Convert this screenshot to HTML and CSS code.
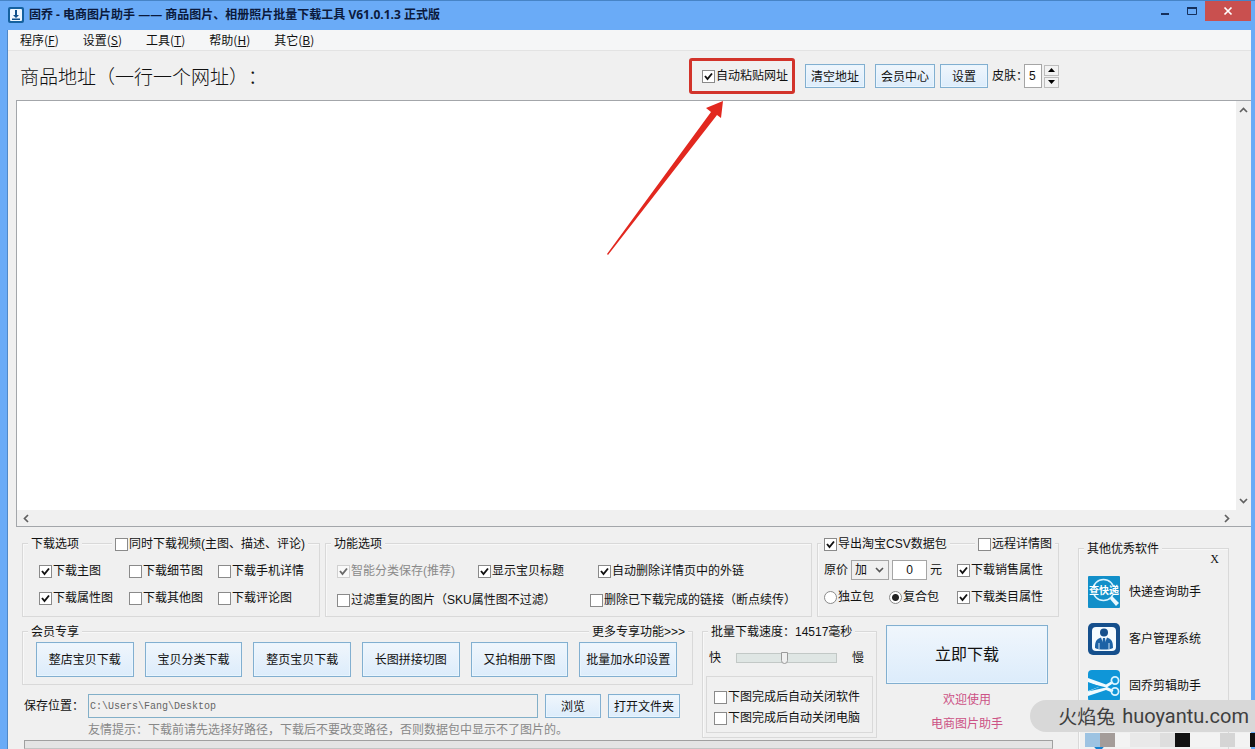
FILE: index.html
```html
<!DOCTYPE html>
<html lang="zh-CN">
<head>
<meta charset="utf-8">
<title>固乔 - 电商图片助手</title>
<link rel="stylesheet" href="styles.css">
</head>
<body>
<header class="titlebar">
  <svg class="app-icon" viewBox="0 0 16 16" aria-hidden="true">
    <rect width="16" height="16" rx="2" fill="#15619f"/>
    <rect x="2" y="2" width="12" height="12" rx="1" fill="#eef7ff"/>
    <path d="M7 3h2v5h2L8 11 5 8h2zM4 11.5h8v1.5H4z" fill="#0d4f8c"/>
  </svg>
  <h1 class="title">固乔 - 电商图片助手 —— 商品图片、相册照片批量下载工具 V61.0.1.3 正式版</h1>
  <div class="window-buttons">
    <button class="win-btn" aria-label="最小化"><svg width="10" height="10"><path d="M1 7h8v2H1z" fill="#16305c"/></svg></button>
    <button class="win-btn" aria-label="最大化"><svg width="12" height="10"><path d="M1.5 1.5h9v7h-9z" fill="none" stroke="#16305c"/><path d="M1 1h10v2H1z" fill="#16305c"/></svg></button>
    <button class="win-btn close" aria-label="关闭"><svg width="10" height="10"><path d="M1.500 1.500l7 7M8.500 1.500l-7 7" stroke="#fff" stroke-width="1.700"/></svg></button>
  </div>
</header>

<div class="client">
  <nav class="menubar">
    <button>程序(<u>F</u>)</button>
    <button>设置(<u>S</u>)</button>
    <button>工具(<u>T</u>)</button>
    <button>帮助(<u>H</u>)</button>
    <button>其它(<u>B</u>)</button>
  </nav>

  <div class="toolbar">
    <label class="address-label" for="urls">商品地址（一行一个网址）：</label>
    <div class="tools">
      <div class="highlight">
        <label class="opt"><input type="checkbox" checked>自动粘贴网址</label>
        <svg class="arrow" width="118" height="156" aria-hidden="true"><path d="M117 1L100 8l5 4L1 154l1 1L111 15l4 3z" fill="#e2281f"/></svg>
      </div>
      <button class="btn w60">清空地址</button>
      <button class="btn w60">会员中心</button>
      <button class="btn w48">设置</button>
      <div class="skin">
        <label for="skin">皮肤：</label>
        <input id="skin" class="skin-input" type="text" value="5">
        <div class="spinner">
          <button aria-label="增加"><svg width="7" height="4"><path d="M3.500 0L7 4H0z"/></svg></button>
          <button aria-label="减少"><svg width="7" height="4"><path d="M0 0h7L3.500 4z"/></svg></button>
        </div>
      </div>
    </div>
  </div>

  <div class="editor">
    <textarea id="urls"></textarea>
    <div class="scroll-v">
      <svg width="9" height="6"><path d="M1 5l3.500-3.500L8 5" class="chev"/></svg>
      <svg width="9" height="6"><path d="M1 1l3.500 3.500L8 1" class="chev"/></svg>
    </div>
    <div class="scroll-h">
      <svg width="6" height="9"><path d="M5 1L1.500 4.500 5 8" class="chev"/></svg>
      <svg width="6" height="9"><path d="M1 1l3.500 3.500L1 8" class="chev"/></svg>
    </div>
  </div>

  <main class="bottom">
    <div class="settings">
      <div class="row-options">
        <section class="group">
          <div class="group-head">
            <h2 class="tag">下载选项</h2>
            <label class="opt tag"><input type="checkbox">同时下载视频(主图、描述、评论)</label>
          </div>
          <div class="grid-download">
            <label class="opt"><input type="checkbox" checked>下载主图</label>
            <label class="opt"><input type="checkbox">下载细节图</label>
            <label class="opt"><input type="checkbox">下载手机详情</label>
            <label class="opt"><input type="checkbox" checked>下载属性图</label>
            <label class="opt"><input type="checkbox">下载其他图</label>
            <label class="opt"><input type="checkbox">下载评论图</label>
          </div>
        </section>

        <section class="group">
          <div class="group-head"><h2 class="tag">功能选项</h2></div>
          <div class="lines-feature">
            <div class="three">
              <label class="opt disabled"><input type="checkbox" checked disabled>智能分类保存(推荐)</label>
              <label class="opt"><input type="checkbox" checked>显示宝贝标题</label>
              <label class="opt"><input type="checkbox" checked>自动删除详情页中的外链</label>
            </div>
            <div class="two">
              <label class="opt"><input type="checkbox">过滤重复的图片（SKU属性图不过滤）</label>
              <label class="opt"><input type="checkbox">删除已下载完成的链接（断点续传）</label>
            </div>
          </div>
        </section>

        <section class="group">
          <div class="group-head csv-head">
            <label class="opt tag"><input type="checkbox" checked>导出淘宝CSV数据包</label>
            <label class="opt tag"><input type="checkbox">远程详情图</label>
          </div>
          <div class="csv-body">
            <div class="line">
              <div class="price">
                <label for="op">原价</label>
                <select id="op"><option>加</option></select>
                <input type="text" value="0" aria-label="加价金额">
                <span>元</span>
              </div>
              <label class="opt"><input type="checkbox" checked>下载销售属性</label>
            </div>
            <div class="line">
              <div class="radios">
                <label class="opt"><input type="radio" name="pack">独立包</label>
                <label class="opt"><input type="radio" name="pack" checked>复合包</label>
              </div>
              <label class="opt"><input type="checkbox" checked>下载类目属性</label>
            </div>
          </div>
        </section>
      </div>

      <div class="row-actions">
        <div class="member-col">
          <section class="group">
            <div class="group-head spread">
              <h2 class="tag">会员专享</h2>
              <a class="tag" href="#">更多专享功能&gt;&gt;&gt;</a>
            </div>
            <div class="member-buttons">
              <button class="btn">整店宝贝下载</button>
              <button class="btn">宝贝分类下载</button>
              <button class="btn">整页宝贝下载</button>
              <button class="btn">长图拼接切图</button>
              <button class="btn">又拍相册下图</button>
              <button class="btn">批量加水印设置</button>
            </div>
          </section>
          <div class="save">
            <label for="path">保存位置：</label>
            <input id="path" type="text" value="C:\Users\Fang\Desktop" readonly>
            <button class="btn">浏览</button>
            <button class="btn">打开文件夹</button>
            <p class="hint">友情提示：下载前请先选择好路径，下载后不要改变路径，否则数据包中显示不了图片的。</p>
          </div>
        </div>

        <section class="group speed">
          <div class="group-head"><h2 class="tag">批量下载速度：14517毫秒</h2></div>
          <div class="slider">
            <span>快</span>
            <input type="range" min="0" max="100" value="48" aria-label="批量下载速度">
            <span>慢</span>
          </div>
          <div class="after">
            <label class="opt"><input type="checkbox">下图完成后自动关闭软件</label>
            <label class="opt"><input type="checkbox">下图完成后自动关闭电脑</label>
          </div>
        </section>

        <div class="start">
          <button class="btn go">立即下载</button>
          <p>欢迎使用</p>
          <p>电商图片助手</p>
        </div>
      </div>

      <div class="progress" role="progressbar" aria-label="下载进度"></div>
    </div>

    <aside class="group software">
      <div class="group-head"><h2 class="tag">其他优秀软件</h2></div>
      <button class="hide" aria-label="关闭推荐">X</button>
      <ul>
        <li>
          <svg width="32" height="32" viewBox="0 0 32 32" aria-hidden="true">
            <rect width="32" height="32" rx="1" fill="#128fc9"/>
            <circle cx="15.500" cy="14" r="10.500" fill="none" stroke="#d8f3ff" stroke-width="1.500"/>
            <path d="M24 20l7 7-3 3-6-7z" fill="#e8f8ff"/>
            <rect x="1" y="10" width="30" height="9" fill="#128fc9"/>
            <text x="16" y="18" text-anchor="middle" class="icon-text">查快递</text>
          </svg>
          <span>快递查询助手</span>
        </li>
        <li>
          <svg width="32" height="32" viewBox="0 0 32 32" aria-hidden="true">
            <rect width="32" height="32" rx="5" fill="#154f8c"/>
            <rect x="4" y="4" width="24" height="24" rx="4" fill="#f4fbff"/>
            <circle cx="16" cy="9.500" r="4" fill="#154f8c"/>
            <path d="M7 25c0-6 1-9 6-10.500l3 8 3-8c5 1.500 6 4.500 6 10.500-4 2-14 2-18 0z" fill="#1d62a5"/>
            <path d="M15 15h2l1 6-2 4-2-4z" fill="#1d62a5"/>
            <path d="M11 20v6M21 20v6" stroke="#cfe6f8"/>
          </svg>
          <span>客户管理系统</span>
        </li>
        <li>
          <svg width="32" height="32" viewBox="0 0 32 32" aria-hidden="true">
            <rect width="32" height="32" rx="4" fill="#0f96d8"/>
            <path d="M0 8l18 6.500 6-3.500 1.500 2-6 4-1 .5L0 13l11 4L0 21.500l18-4 1-.5 6.500 3-1.500 2.500-6-2.500L0 26z" fill="#f2fbff"/>
            <path d="M0 12l12 4.500L0 21z" fill="#0f96d8"/>
            <circle cx="27" cy="10.500" r="3.600" fill="none" stroke="#d8f3ff" stroke-width="1.800"/>
            <circle cx="27" cy="21.500" r="3.600" fill="none" stroke="#d8f3ff" stroke-width="1.800"/>
          </svg>
          <span>固乔剪辑助手</span>
        </li>
        <li>
          <svg width="32" height="32" viewBox="0 0 32 32" aria-hidden="true">
            <path d="M2 16h18c0 8-3 13-6 16H8c-4-4-6-9-6-16z" fill="#1580cf"/>
          </svg>
        </li>
      </ul>
    </aside>
  </main>
</div>

<div class="mosaic" aria-hidden="true">
  <i class="blue"></i><i class="taupe"></i><i></i><i class="g1"></i><i class="g1"></i><i class="g2"></i><i class="black"></i><i></i><i></i><i class="g3"></i><i></i><i class="black"></i>
</div>
<div class="watermark"><span class="mark-cn">火焰兔</span><span class="mark-en">huoyantu.com</span></div>
</body>
</html>
```

FILE: styles.css
```css
* {
  box-sizing: border-box;
}

body {
  margin: 0;
  height: 100vh;
  display: flex;
  flex-direction: column;
  position: relative;
  overflow: hidden;
  background: #6aabf7;
  border-top: 1px solid #4784c6;
  color: #111;
  font: 12px/16px "Liberation Sans", "Noto Sans CJK SC", sans-serif;
  text-spacing-trim: space-all;
  white-space: nowrap;
}

button,
input,
select,
textarea {
  margin: 0;
  padding: 0;
  font: inherit;
  color: inherit;
}

h1,
h2,
p,
ul {
  margin: 0;
  padding: 0;
  font-size: 12px;
  font-weight: 400;
  list-style: none;
}

svg {
  display: block;
}

/* Title bar */
.titlebar {
  display: flex;
  align-items: center;
  height: 29px;
  padding: 0 4px 2px 8px;
}

.app-icon {
  width: 16px;
  height: 16px;
  margin-right: 5px;
}

.title {
  flex: 1;
  font-family: "Open Sans", "Noto Sans CJK SC", sans-serif;
  font-weight: 700;
  color: #0b1a3c;
}

.window-buttons {
  display: flex;
  align-self: flex-start;
}

.win-btn {
  display: flex;
  align-items: center;
  justify-content: center;
  width: 27px;
  height: 20px;
  border: 0;
  background: none;
}

.win-btn.close {
  width: 46px;
  background: #c9504f;
}

/* Client area */
.client {
  flex: 1;
  min-height: 0;
  display: flex;
  flex-direction: column;
  margin: 0 4px 0 7px;
  border-left: 1px solid #4f88c8;
  background: #f0f0f0;
}

.menubar {
  display: flex;
  gap: 24px;
  height: 21px;
  padding-left: 12px;
  background: #f5f6f7;
  border-bottom: 1px solid #e3e3e3;
}

.menubar button {
  border: 0;
  background: none;
  font-family: "Noto Sans CJK SC", sans-serif;
}

.toolbar {
  display: flex;
  align-items: center;
  justify-content: space-between;
  height: 49px;
  padding: 1px 192px 0 12px;
}

.address-label {
  font: 300 19px/24px "Noto Sans CJK SC", sans-serif;
}

.tools,
.skin {
  display: flex;
  align-items: center;
}

.highlight {
  position: relative;
  display: flex;
  align-items: center;
  height: 36px;
  margin-right: 10px;
  padding: 0 4px 0 10px;
  border: 3px solid #d2332a;
  border-radius: 3px;
}

.arrow {
  position: absolute;
  left: -86px;
  top: 39px;
}

.opt {
  display: flex;
  align-items: center;
  gap: 1px;
}

.opt.disabled {
  color: #8a8a8a;
}

input[type="checkbox"],
input[type="radio"] {
  appearance: none;
  flex: none;
  width: 13px;
  height: 13px;
  border: 1px solid #8a8a8a;
  background: #fff center / 11px 11px no-repeat;
}

input[type="checkbox"]:checked {
  background-image: url("data:image/svg+xml,%3Csvg xmlns='http://www.w3.org/2000/svg' viewBox='0 0 11 11'%3E%3Cpath d='M2 5l2.500 3L9 2.500' fill='none' stroke='%23111' stroke-width='1.900'/%3E%3C/svg%3E");
}

input[type="checkbox"]:disabled {
  border-color: #bcbcbc;
  opacity: 0.6;
}

input[type="radio"] {
  border-radius: 50%;
}

input[type="radio"]:checked {
  background-image: radial-gradient(circle, #222 3px, transparent 4px);
}

.btn {
  height: 24px;
  padding-top: 1px;
  border: 1px solid #82afd0;
  background: linear-gradient(#f0f6fc, #dcecfb);
  box-shadow: inset 0 0 0 1px #e9f5fe;
}

.w60 {
  width: 60px;
  margin-right: 10px;
}

.w48 {
  width: 48px;
  margin-left: -5px;
  margin-right: 4px;
}

.skin label {
  width: 32px;
}

.skin-input {
  width: 18px;
  height: 24px;
  padding-left: 4px;
  border: 1px solid #a5a5a5;
  background: #fff;
}

.spinner {
  display: flex;
  flex-direction: column;
  gap: 1px;
  margin-left: 2px;
}

.spinner button {
  display: flex;
  align-items: center;
  justify-content: center;
  width: 15px;
  height: 11px;
  border: 1px solid #bdbdbd;
  background: #f2f2f2;
}

/* Address editor */
.editor {
  flex: 1;
  min-height: 0;
  display: grid;
  grid-template-columns: 1fr 15px;
  grid-template-rows: 1fr 16px;
  margin-left: 8px;
  border: 1px solid #a3a6aa;
  border-right: 0;
}

.editor textarea {
  display: block;
  width: 100%;
  height: 100%;
  padding: 2px;
  border: 0;
  resize: none;
  background: #fff;
}

.scroll-v,
.scroll-h {
  display: flex;
  align-items: center;
  justify-content: space-between;
  background: #f0f0f0;
}

.scroll-v {
  flex-direction: column;
  padding: 6px 0;
}

.scroll-h {
  padding: 0 6px;
}

.chev {
  fill: none;
  stroke: #606060;
  stroke-width: 1.700;
}

/* Bottom panels */
.bottom {
  display: grid;
  grid-template-columns: minmax(0, 1fr) 151px;
  gap: 19px;
  padding: 16px 22px 0 14px;
}

.group {
  border: 1px solid #d9d9d9;
  box-shadow: inset 1px 1px #f8f8f8;
}

.group-head {
  display: flex;
  height: 16px;
  margin-top: -8px;
  padding-left: 5px;
}

.tag {
  padding: 0 3px;
  background: #f0f0f0;
  color: inherit;
  text-decoration: none;
}

.spread {
  justify-content: space-between;
  padding-right: 4px;
}

.row-options {
  display: grid;
  grid-template-columns: 298fr 487fr 242fr;
  gap: 5px;
}

.row-options .group {
  height: 74px;
}

.row-options .group:first-child .group-head {
  justify-content: space-between;
  padding-right: 11px;
}

.grid-download {
  display: grid;
  grid-template-columns: 90fr 89fr 101fr;
  gap: 11px 0;
  padding: 11px 0 0 16px;
}

.lines-feature {
  display: grid;
  gap: 13px;
  padding: 11px 0 0 11px;
}

.three {
  display: grid;
  grid-template-columns: 141fr 120fr 213fr;
}

.two {
  display: grid;
  grid-template-columns: 253fr 221fr;
}

.line {
  display: flex;
  align-items: center;
  justify-content: space-between;
}

.csv-head {
  justify-content: space-between;
  padding: 0 3px;
}

.csv-body {
  display: grid;
  gap: 9px;
  padding: 8px 15px 0 6px;
}

.price {
  display: flex;
  align-items: center;
  gap: 3px;
}

.price select {
  appearance: none;
  width: 38px;
  height: 20px;
  padding-left: 3px;
  border: 1px solid #a5a5a5;
  border-radius: 0;
  background: #f0f0f0 url("data:image/svg+xml,%3Csvg xmlns='http://www.w3.org/2000/svg' viewBox='0 0 9 6'%3E%3Cpath d='M1 1l3.500 3.500L8 1' fill='none' stroke='%23555' stroke-width='1.600'/%3E%3C/svg%3E") right 4px center / 9px 6px no-repeat;
}

.price input {
  width: 35px;
  height: 20px;
  border: 1px solid #a5a5a5;
  background: #fff;
  text-align: center;
}

.radios {
  display: flex;
  gap: 15px;
}

.row-actions {
  display: grid;
  grid-template-columns: minmax(0, 671fr) minmax(0, 175fr) minmax(0, 162fr);
  gap: 9px;
  margin-top: 8px;
  padding-right: 11px;
}

.member-col,
.speed {
  margin-top: 6px;
}

.member-col .group {
  height: 54px;
}

.member-buttons {
  display: grid;
  grid-template-columns: repeat(6, 1fr);
  gap: 11px;
  padding: 2px 15px 0 13px;
}

.member-buttons .btn {
  height: 35px;
}

.save {
  display: grid;
  grid-template-columns: 57px 1fr 56px 72px;
  gap: 4px 7px;
  align-items: center;
  padding: 9px 13px 0 2px;
}

.save label {
  min-width: 0;
}

.save input {
  width: 100%;
  height: 24px;
  padding: 0 1px;
  border: 1px solid #82afc8;
  background: #f0f0f0;
  color: #666;
  font-family: "Liberation Mono", monospace;
  font-size: 10px;
}

.hint {
  grid-column: 2 / -1;
  color: #888;
}

.slider {
  display: flex;
  align-items: center;
  gap: 15px;
  padding: 10px 12px 0 6px;
}

.slider input {
  appearance: none;
  flex: 1;
  min-width: 0;
  height: 12px;
  background: transparent;
}

.slider input::-webkit-slider-runnable-track {
  height: 10px;
  border: 1px solid #c2c8c6;
  background: #dfe6e4;
}

.slider input::-webkit-slider-thumb {
  appearance: none;
  width: 7px;
  height: 12px;
  margin-top: -2px;
  border: 1px solid #9a9a9a;
  border-radius: 0 0 4px 4px;
  background: #f0f0f0;
}

.after {
  display: grid;
  gap: 5px;
  margin: 10px 3px 3px;
  padding: 12px 0 6px 7px;
  border: 1px solid #d9d9d9;
}

.start {
  display: flex;
  flex-direction: column;
  gap: 8px;
  text-align: center;
  color: #cc5285;
}

.btn.go {
  height: 59px;
  color: #111;
  font-size: 16px;
}

.progress {
  height: 9px;
  margin: 2px 6px 0 2px;
  border: 1px solid #a0a0a0;
  border-bottom-color: #c4c4c4;
  background: #e4e4e4;
}

/* Other software */
.software {
  position: relative;
  margin-top: 5px;
  border-bottom: 0;
}

.hide {
  position: absolute;
  top: 2px;
  right: 9px;
  border: 0;
  background: none;
  font-family: "Liberation Serif", serif;
}

.software ul {
  display: grid;
  gap: 15px;
  padding: 19px 0 0 9px;
}

.software li {
  display: flex;
  align-items: center;
  gap: 9px;
}

.icon-text {
  fill: #fff;
  font: 700 10px "Noto Sans CJK SC", sans-serif;
}

/* Overlays */
.watermark {
  position: absolute;
  right: 0;
  bottom: 17px;
  display: flex;
  align-items: center;
  gap: 7px;
  height: 32px;
  padding: 0 6px 0 28px;
  border-radius: 16px 0 0 16px;
  background: #d8d8d8;
  color: #3f3f3f;
}

.mark-cn {
  font: 19px/32px "Noto Sans CJK SC", sans-serif;
}

.mark-en {
  font: 20px/32px Roboto, sans-serif;
}

.mosaic {
  position: absolute;
  right: 0;
  bottom: 2px;
  display: grid;
  grid-template-columns: repeat(11, 15px) 5px;
  height: 14px;
}

.mosaic i {
  background: #f3f3f3;
}

.mosaic .blue {
  background: #9dc3e2;
}

.mosaic .taupe {
  background: #a49c99;
}

.mosaic .g1 {
  background: #e9e9e9;
}

.mosaic .g2 {
  background: #dedede;
}

.mosaic .g3 {
  background: #d5d5d5;
}

.mosaic .black {
  background: #101010;
}
```
